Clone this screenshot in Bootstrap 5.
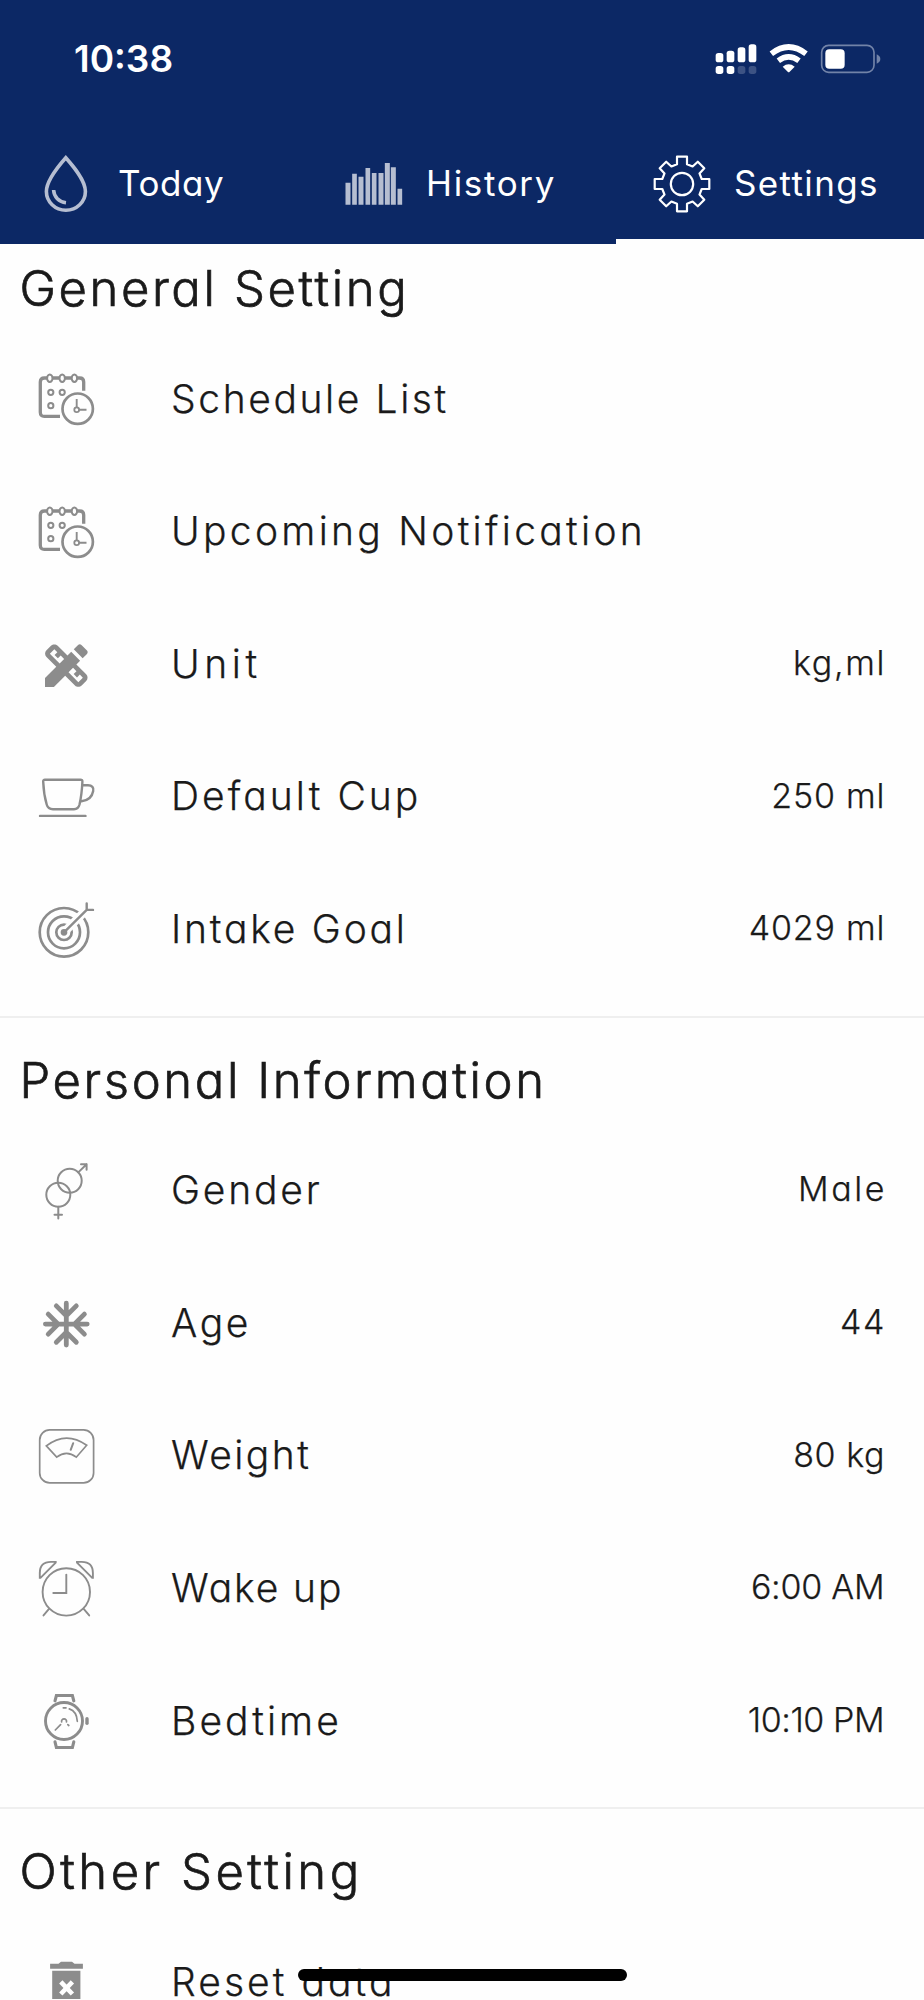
<!DOCTYPE html>
<html lang="en">
<head>
<meta charset="utf-8">
<meta name="viewport" content="width=device-width, initial-scale=1">
<title>Settings</title>
<link href="https://cdn.jsdelivr.net/npm/bootstrap@5.3.0/dist/css/bootstrap.min.css" rel="stylesheet">
<style>
body{width:924px;height:2000px;background:#fefefe;color:#1a1a1a;font-family:Inter,"Open Sans",sans-serif;font-feature-settings:"cv11" 1;overflow:hidden}
.app-head{background:#0c2865;height:244px}
.status-bar{height:123px;padding:0 0 0 74px}
.clock{font-size:37px;font-weight:600;line-height:1;padding-top:40px}
.status-bar svg{margin:41.7px 42px 0 0}
.tab-item{width:308px;height:121px;padding-left:37px}
.tab-item svg{flex:none;margin-top:1px}
.tab-item span{font-size:35px;line-height:44px;white-space:nowrap;letter-spacing:var(--k);margin:-1px 0 0 23px}
.tab-item.active{border-bottom:5px solid #fefefe}
.tab-item.active svg{margin-top:6px}
.tab-item.active span{margin-top:4px}
.sec{border-top:2px solid #efefef;height:791.6px}
.sec h2{height:107.700px;padding:32px 0 0 19.500px;font-size:49px;line-height:62px;font-weight:300;-webkit-text-stroke:.7px #1a1a1a;margin:0;white-space:nowrap;letter-spacing:var(--k)}
.sec.first{border:0;height:771.6px}
.sec.first h2{height:89.700px;padding-top:14px}
.sec.last{height:192px;overflow:hidden}
.item{height:132.6px;padding:0 39.500px 0 38px}
.item svg{flex:none;margin-right:75px}
.label,.value{font-weight:300;line-height:1.3;white-space:nowrap;letter-spacing:var(--k);-webkit-text-stroke:.25px #1a1a1a}
.label{font-size:39px;margin-top:-2px}
.value{font-size:34px;margin:-4px calc(-1*var(--k)) 0 auto}
.k-n5{--k:-.45px}.k-n2{--k:-.25px}.k-06{--k:.55px}.k-08{--k:.8px}.k-14{--k:1.35px}.k-17{--k:1.65px}.k-19{--k:1.92px}
.k-24{--k:2.45px}.k-26{--k:2.6px}.k-29{--k:2.8px}.k-31{--k:3.05px}.k-33{--k:3.3px}.k-35{--k:3.5px}.k-46{--k:4.6px}
.ic{fill:none;stroke:#8c8c8c;stroke-linecap:round;stroke-linejoin:round}
.home-bar{left:298px;top:1969px;width:329px;height:12px;border-radius:6px;background:#000}
</style>
</head>
<body class="position-relative">
<header class="app-head text-white">
  <div class="status-bar d-flex justify-content-between align-items-start">
    <span class="clock">10:38</span>
    <svg width="167" height="33" viewBox="760 125 501 99" fill="#fff">
      <rect x="762" y="158" width="23" height="28" rx="8"/><rect x="795" y="151" width="23" height="35" rx="8"/><rect x="828" y="141" width="23" height="45" rx="8"/><rect x="861" y="132" width="23" height="54" rx="8"/>
      <rect x="762" y="197" width="23" height="24" rx="8"/><rect x="795" y="197" width="23" height="24" rx="8"/>
      <g opacity=".2"><rect x="828" y="197" width="23" height="24" rx="8"/><rect x="861" y="197" width="23" height="24" rx="8"/></g>
      <path d="M929 160Q981 120 1033 160M950 181Q981 158 1012 181" fill="none" stroke="#fff" stroke-width="17"/>
      <path d="M963 199Q981 185 999 199L984 214Q981 217 978 214Z"/>
      <rect x="1080" y="135" width="157" height="81" rx="21" fill="none" stroke="#7283a8" stroke-width="5"/>
      <rect x="1091" y="147" width="58" height="58" rx="12"/>
      <path d="M1245 162Q1256 167 1256 176T1245 190Z" fill="#7283a8"/>
    </svg>
  </div>
  <nav class="d-flex">
    <div class="tab-item d-flex align-items-center">
      <svg width="58" height="58" viewBox="0 0 58 58" fill="none" stroke="#b6bed1" stroke-width="3.6"><path d="M28.8 2.8C22 10.5 9.4 25 9.4 36.5A19.5 18.7 0 0 0 48.4 36.5C48.4 25 35.6 10.5 28.8 2.8ZM16.6 35C17 42 22 47 29 47.7"/></svg>
      <span class="k-06">Today</span>
    </div>
    <div class="tab-item d-flex align-items-center">
      <svg width="58" height="58" viewBox="1036.5 465 174 174" fill="#b6bed1"><path d="M1038 548h15v66h-15zM1058 521h14v93h-14zM1077 530h15v84h-15zM1098 504h14v110h-14zM1117 519h14v95h-14zM1137 519h15v95h-15zM1156 489h15v125h-15zM1174 502h15v112h-15zM1194 566h14v48h-14z"/></svg>
      <span class="k-17">History</span>
    </div>
    <div class="tab-item active d-flex align-items-center">
      <svg width="58" height="58" viewBox="-29 -29 58 58" fill="none" stroke="#fff" stroke-width="2.200" stroke-linejoin="round"><circle r="11.2"/><path d="M-5-19.7V-27.3H5V-19.7L10.6-17.5L15.8-22.3L22.3-15.8L17.5-10.6L19.7-5H27.3V5H19.7L17.5 10.6L22.3 15.8L15.8 22.3L10.6 17.5L5 19.7V27.3H-5V19.7L-10.6 17.5L-15.8 22.3L-22.3 15.8L-17.5 10.6L-19.7 5H-27.3V-5H-19.7L-17.5-10.6L-22.3-15.8L-15.8-22.3L-10.6-17.5Z"/></svg>
      <span class="k-14">Settings</span>
    </div>
  </nav>
</header>

<section class="sec first">
  <h2 class="k-26">General Setting</h2>
  <div class="item d-flex align-items-center">
    <svg class="ic" width="58" height="58" viewBox="0 0 58 58"><g id="calendar" stroke-linecap="butt"><path d="M22 45.3H6.3Q2.3 45.3 2.3 41.3V11Q2.3 7 6.3 7H41.7Q45.7 7 45.7 11V19.7" stroke-width="3.3"/><g fill="#fefefe" stroke-width="2"><ellipse cx="11.8" cy="7.3" rx="2.7" ry="3.8"/><ellipse cx="24.2" cy="7.3" rx="2.7" ry="3.8"/><ellipse cx="36.4" cy="7.3" rx="2.7" ry="3.8"/><circle cx="12.8" cy="21.3" r="2.6"/><circle cx="24.2" cy="21.3" r="2.6"/><circle cx="12.8" cy="34.7" r="2.6"/></g><circle cx="39.7" cy="37.7" r="15.2" stroke-width="2.7"/><path d="M38.7 28V36M41 38.7H48.5" stroke-width="1.9"/><circle cx="38.7" cy="38.7" r="2.4" stroke-width="1.8"/></g></svg>
    <span class="label k-26">Schedule List</span>
  </div>
  <div class="item d-flex align-items-center">
    <svg class="ic" width="58" height="58" viewBox="0 0 58 58"><use href="#calendar"/></svg>
    <span class="label k-33">Upcoming Notification</span>
  </div>
  <div class="item d-flex align-items-center">
    <svg width="58" height="58" viewBox="0 0 58 58" fill="#8c8c8c"><path transform="translate(-.1 1.2) scale(2.37)" d="M16.24 11.51l1.57-1.57-3.75-3.75-1.57 1.57-4.14-4.13c-.78-.78-2.05-.78-2.83 0l-1.9 1.9c-.78.78-.78 2.05 0 2.83l4.13 4.13L3 17.25V21h3.75l4.76-4.76 4.13 4.13c.95.95 2.23.6 2.83 0l1.9-1.9c.78-.78.78-2.05 0-2.83l-4.13-4.13zm-7.06-.44L5.04 6.94l1.89-1.9L8.2 6.31 7.02 7.5l1.41 1.41 1.19-1.19 1.45 1.45-1.89 1.9zm7.88 7.89l-4.13-4.13 1.9-1.9 1.45 1.45-1.19 1.19 1.41 1.41 1.19-1.19 1.27 1.27-1.9 1.9zM20.71 7.04c.39-.39.39-1.02 0-1.41l-2.34-2.34c-.47-.47-1.12-.29-1.41 0l-1.83 1.83 3.75 3.75 1.83-1.83z"/></svg>
    <span class="label k-46">Unit</span><span class="value k-17">kg,ml</span>
  </div>
  <div class="item d-flex align-items-center">
    <svg class="ic" width="58" height="58" viewBox="0 0 58 58" stroke-width="2.4"><path d="M7 10.7H42.5Q44.5 10.7 44.4 12.7C44 21 43 29 41.5 35.5Q40.3 40.2 36 40.2H15Q10 40.2 8.7 35.5C6.5 28 5.5 20 5.2 12.7Q5 10.7 7 10.7ZM45 16.3H50C54 16.3 56 18.5 55.2 22C54.2 27.5 51.5 31.5 43.5 32.2M2 46.9H47.5"/></svg>
    <span class="label k-31">Default Cup</span><span class="value k-08">250 ml</span>
  </div>
  <div class="item d-flex align-items-center">
    <svg class="ic" width="58" height="58" viewBox="0 0 58 58" stroke-width="2.7"><circle cx="26" cy="31.3" r="24.3"/><circle cx="26" cy="31.3" r="16"/><circle cx="26" cy="31.3" r="7.7"/><path d="M26 31.3L48 9.3" stroke="#fefefe" stroke-width="8.5" stroke-linecap="butt"/><circle cx="26" cy="31.3" r="2" fill="#8c8c8c"/><path d="M26 31.3L48.7 8.9M48.7 2.5V8.9H55" stroke-width="2.4"/></svg>
    <span class="label k-29">Intake Goal</span><span class="value k-08">4029 ml</span>
  </div>
</section>

<section class="sec">
  <h2 class="k-26">Personal Information</h2>
  <div class="item d-flex align-items-center">
    <svg class="ic" width="58" height="58" viewBox="0 0 58 58" stroke-width="2"><circle cx="31.7" cy="17.7" r="12"/><circle cx="20.3" cy="31.7" r="12"/><path d="M40.3 9.4L48.6 1.2M43 1.2H48.6V6.7M20.3 43.7V55.5M16.5 51.7H24"/></svg>
    <span class="label k-29">Gender</span><span class="value k-26">Male</span>
  </div>
  <div class="item d-flex align-items-center">
    <svg class="ic" width="58" height="58" viewBox="0 0 58 58" stroke-width="4.8"><path d="M28.3 8.2V50M7.4 29.1H49.2M18.3 10.9L28.3 20.9L38.3 10.9M18.3 47.3L28.3 37.3L38.3 47.3M10.2 19.1L20.2 29.1L10.2 39.1M46.4 19.1L36.4 29.1L46.4 39.1"/></svg>
    <span class="label k-26">Age</span><span class="value k-17">44</span>
  </div>
  <div class="item d-flex align-items-center">
    <svg class="ic" width="58" height="58" viewBox="0 0 58 58" stroke-width="1.7"><rect x="1.7" y="1.9" width="53.9" height="53" rx="10"/><path d="M8.3 17.9Q28 2.5 48.7 17.2L38.3 29.2Q28.5 21.5 18.7 29.2Z" stroke-linejoin="miter"/><path d="M35.2 15.2L32.7 21.8" stroke-width="2"/></svg>
    <span class="label k-24">Weight</span><span class="value k-06">80 kg</span>
  </div>
  <div class="item d-flex align-items-center">
    <svg class="ic" width="58" height="58" viewBox="0 0 58 58" stroke-width="1.9"><circle cx="28.3" cy="31.9" r="23.7"/><path d="M28.3 14.6V33H15.3M1.8 17.9V13Q1.8 1.9 13 1.9H17.7V2.600L2.500 17.900ZM54.9 17.9V13Q54.9 1.9 43.7 1.9H39V2.600L54.200 17.900ZM11 48.9L5.5 55.4M45.7 48.9L51.2 55.4" stroke-linejoin="miter"/></svg>
    <span class="label k-19">Wake up</span><span class="value k-n2">6:00 AM</span>
  </div>
  <div class="item d-flex align-items-center">
    <svg class="ic" width="58" height="58" viewBox="0 0 58 58"><circle cx="26" cy="28" r="18.5" stroke-width="2.9"/><path d="M17 7.8L18.4 2.5H34.4L35.8 7.8M17 48.8L18.4 54.5H34.4L35.8 48.8" stroke-width="3.1" stroke-linejoin="miter"/><path d="M49 25.8V30.2" stroke-width="3.4"/><path d="M17.3 37L22.6 31.6M29.8 31.6L30.8 32.5M23.6 28.8A2.5 2.5 0 1 1 28.5 28.8M25.3 14.8L28 14.9M31.3 15.9C36 17.5 39 22 39.3 28.3" stroke-width="1.7"/></svg>
    <span class="label k-31">Bedtime</span><span class="value k-n5">10:10 PM</span>
  </div>
</section>

<section class="sec last">
  <h2 class="k-35">Other Setting</h2>
  <div class="item d-flex align-items-center">
    <svg width="58" height="58" viewBox="0 0 58 58" fill="#8c8c8c"><path d="M12.1 9.8H20.5L23 7.8H34L36.5 9.8H44.9V14.8H12.1ZM14.2 16.8H42.4V52Q42.4 56 38.4 56H18.2Q14.2 56 14.2 52Z"/><path d="M22.8 27.8L34.4 40M34.4 27.8L22.8 40" stroke="#fefefe" stroke-width="4.6"/></svg>
    <span class="label k-31">Reset data</span>
  </div>
</section>
<div class="home-bar position-absolute"></div>
<script src="https://cdn.jsdelivr.net/npm/bootstrap@5.3.0/dist/js/bootstrap.bundle.min.js"></script>
</body>
</html>
